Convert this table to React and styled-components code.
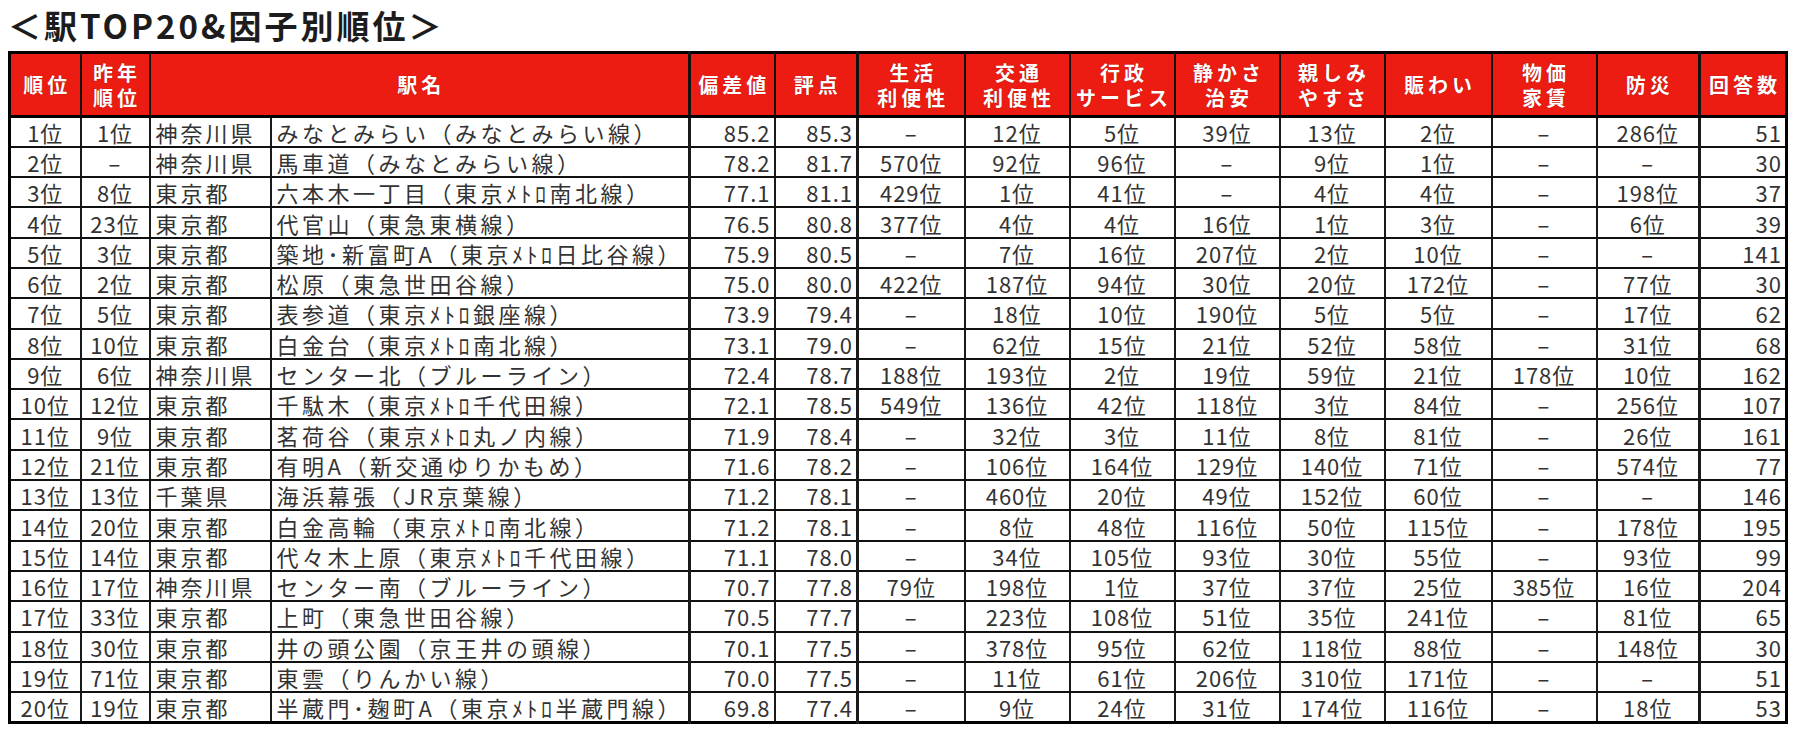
import styled, { createGlobalStyle } from "styled-components"

const GlobalStyle = createGlobalStyle`
  html, body {
    margin: 0;
    padding: 0;
    background: #fff;
  }
  body {
    font-family: "Noto Sans CJK JP", "Noto Sans", sans-serif;
    color: #2b2b2b;
  }
`

const Page = styled.div`
  width: 1800px;
  height: 735px;
  padding: 3px 0 0 8px;
  box-sizing: border-box;
  overflow: hidden;
`

const Title = styled.h1`
  margin: 0;
  height: 48px;
  font-size: 33px;
  line-height: 44px;
  font-weight: 700;
  letter-spacing: 3px;
  color: #1c1c1c;
`

const Table = styled.table`
  border-collapse: collapse;
  table-layout: fixed;
  width: 1777px;
  border: 3px solid #000;
`

const Col = styled.col`
  width: ${(p) => p.$w}px;
`

const HeadCell = styled.th`
  background: #ec1c12;
  color: #fff;
  font-weight: 700;
  font-size: 20px;
  line-height: 25px;
  letter-spacing: 4px;
  height: 61px;
  padding: 0 0 0 4px;
  text-align: center;
  white-space: pre-line;
  border-left: ${(p) => (p.$thick ? 3 : 2)}px solid #111;
  border-bottom: 3px solid #000;
  text-shadow: 0 0 1px rgba(80, 0, 0, 0.6);
`

const Row = styled.tr`
  height: 30.3px;
`

const Cell = styled.td`
  font-size: 22px;
  line-height: 26px;
  letter-spacing: ${(p) => p.$spacing}px;
  padding: 0 ${(p) => (p.$align === "right" ? 3 : 2)}px 0 ${(p) => (p.$align === "left" ? 5 : 2)}px;
  text-align: ${(p) => p.$align || "center"};
  white-space: nowrap;
  border-left: ${(p) => (p.$thick ? 3 : 2)}px solid #1a1a1a;
  border-bottom: 2px solid #111;
  color: #333;
`

const widths = [71, 69, 121, 419, 85, 83, 107, 105, 105, 105, 105, 107, 105, 103, 87]

const headers = [
  { label: "順位" },
  { label: "昨年\n順位" },
  { label: "駅名", span: 2 },
  { label: "偏差値", thick: true },
  { label: "評点" },
  { label: "生活\n利便性", thick: true },
  { label: "交通\n利便性" },
  { label: "行政\nサービス" },
  { label: "静かさ\n治安" },
  { label: "親しみ\nやすさ" },
  { label: "賑わい" },
  { label: "物価\n家賃" },
  { label: "防災" },
  { label: "回答数", thick: true },
]

const D = "–"

const rows = [
  ["1位", "1位", "神奈川県", "みなとみらい（みなとみらい線）", "85.2", "85.3", D, "12位", "5位", "39位", "13位", "2位", D, "286位", "51"],
  ["2位", D, "神奈川県", "馬車道（みなとみらい線）", "78.2", "81.7", "570位", "92位", "96位", D, "9位", "1位", D, D, "30"],
  ["3位", "8位", "東京都", "六本木一丁目（東京ﾒﾄﾛ南北線）", "77.1", "81.1", "429位", "1位", "41位", D, "4位", "4位", D, "198位", "37"],
  ["4位", "23位", "東京都", "代官山（東急東横線）", "76.5", "80.8", "377位", "4位", "4位", "16位", "1位", "3位", D, "6位", "39"],
  ["5位", "3位", "東京都", "築地･新富町A（東京ﾒﾄﾛ日比谷線）", "75.9", "80.5", D, "7位", "16位", "207位", "2位", "10位", D, D, "141"],
  ["6位", "2位", "東京都", "松原（東急世田谷線）", "75.0", "80.0", "422位", "187位", "94位", "30位", "20位", "172位", D, "77位", "30"],
  ["7位", "5位", "東京都", "表参道（東京ﾒﾄﾛ銀座線）", "73.9", "79.4", D, "18位", "10位", "190位", "5位", "5位", D, "17位", "62"],
  ["8位", "10位", "東京都", "白金台（東京ﾒﾄﾛ南北線）", "73.1", "79.0", D, "62位", "15位", "21位", "52位", "58位", D, "31位", "68"],
  ["9位", "6位", "神奈川県", "センター北（ブルーライン）", "72.4", "78.7", "188位", "193位", "2位", "19位", "59位", "21位", "178位", "10位", "162"],
  ["10位", "12位", "東京都", "千駄木（東京ﾒﾄﾛ千代田線）", "72.1", "78.5", "549位", "136位", "42位", "118位", "3位", "84位", D, "256位", "107"],
  ["11位", "9位", "東京都", "茗荷谷（東京ﾒﾄﾛ丸ノ内線）", "71.9", "78.4", D, "32位", "3位", "11位", "8位", "81位", D, "26位", "161"],
  ["12位", "21位", "東京都", "有明A（新交通ゆりかもめ）", "71.6", "78.2", D, "106位", "164位", "129位", "140位", "71位", D, "574位", "77"],
  ["13位", "13位", "千葉県", "海浜幕張（JR京葉線）", "71.2", "78.1", D, "460位", "20位", "49位", "152位", "60位", D, D, "146"],
  ["14位", "20位", "東京都", "白金高輪（東京ﾒﾄﾛ南北線）", "71.2", "78.1", D, "8位", "48位", "116位", "50位", "115位", D, "178位", "195"],
  ["15位", "14位", "東京都", "代々木上原（東京ﾒﾄﾛ千代田線）", "71.1", "78.0", D, "34位", "105位", "93位", "30位", "55位", D, "93位", "99"],
  ["16位", "17位", "神奈川県", "センター南（ブルーライン）", "70.7", "77.8", "79位", "198位", "1位", "37位", "37位", "25位", "385位", "16位", "204"],
  ["17位", "33位", "東京都", "上町（東急世田谷線）", "70.5", "77.7", D, "223位", "108位", "51位", "35位", "241位", D, "81位", "65"],
  ["18位", "30位", "東京都", "井の頭公園（京王井の頭線）", "70.1", "77.5", D, "378位", "95位", "62位", "118位", "88位", D, "148位", "30"],
  ["19位", "71位", "東京都", "東雲（りんかい線）", "70.0", "77.5", D, "11位", "61位", "206位", "310位", "171位", D, D, "51"],
  ["20位", "19位", "東京都", "半蔵門･麹町A（東京ﾒﾄﾛ半蔵門線）", "69.8", "77.4", D, "9位", "24位", "31位", "174位", "116位", D, "18位", "53"],
]

// per column: alignment, letter spacing, and where the sheet has a heavy rule on the left
const colAlign = ["center", "center", "left", "left", "right", "right", "center", "center", "center", "center", "center", "center", "center", "center", "right"]
const colSpacing = [1, 1, 3, 3.5, 1, 1, 1, 1, 1, 1, 1, 1, 1, 1, 1]
const thickCols = [4, 6, 14]

const App = () => {
  return (
    <Page>
      <GlobalStyle />
      <Title>＜駅TOP20&因子別順位＞</Title>
      <Table>
        <colgroup>
          {widths.map((w, i) => (
            <Col key={i} $w={w} />
          ))}
        </colgroup>
        <thead>
          <tr>
            {headers.map((h) => (
              <HeadCell key={h.label} colSpan={h.span || 1} $thick={h.thick}>
                {h.label}
              </HeadCell>
            ))}
          </tr>
        </thead>
        <tbody>
          {rows.map((r) => (
            <Row key={r[0]}>
              {r.map((v, i) => (
                <Cell
                  key={i}
                  $align={v === D ? "center" : colAlign[i]}
                  $thick={thickCols.includes(i)}
                  $spacing={colSpacing[i]}
                >
                  {v}
                </Cell>
              ))}
            </Row>
          ))}
        </tbody>
      </Table>
    </Page>
  )
}

export default App
